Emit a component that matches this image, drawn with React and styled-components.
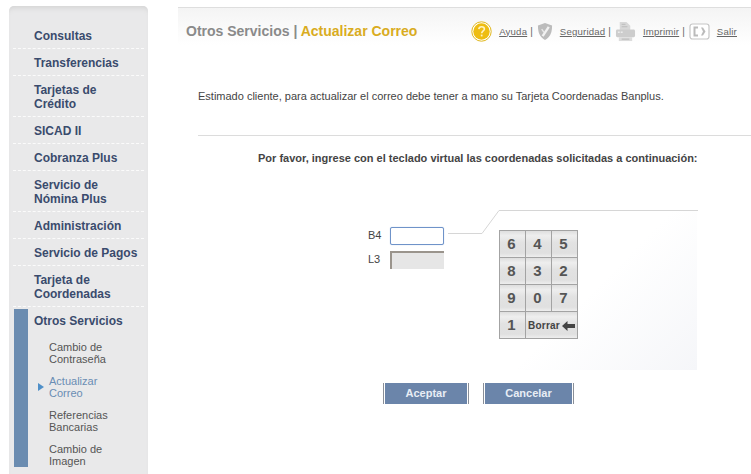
import React from "react";
import styled, { createGlobalStyle } from "styled-components";

const Global = createGlobalStyle`
  html, body { margin: 0; padding: 0; background: #fff; }
  body { font-family: "Liberation Sans", Arial, sans-serif; overflow: hidden; }
`;

const menu = [
  { label: "Consultas" },
  { label: "Transferencias" },
  { label: "Tarjetas de Crédito", narrow: true },
  { label: "SICAD II" },
  { label: "Cobranza Plus" },
  { label: "Servicio de Nómina Plus", narrow: true },
  { label: "Administración" },
  { label: "Servicio de Pagos" },
  { label: "Tarjeta de Coordenadas", narrow: true },
];

const subMenu = [
  { label: "Cambio de Contraseña" },
  { label: "Actualizar Correo", active: true },
  { label: "Referencias Bancarias" },
  { label: "Cambio de Imagen" },
];

const keys = [["6", "4", "5"], ["8", "3", "2"], ["9", "0", "7"]];

function HelpIcon() {
  return (
    <svg width="21" height="21" viewBox="0 0 21 21">
      <circle cx="10.5" cy="10.5" r="9.7" fill="#fff" stroke="#e0b71c" strokeWidth="1" />
      <circle cx="10.5" cy="10.5" r="8.2" fill="#eebd12" />
      <path d="M7.8 8.2c.2-1.7 1.3-2.5 2.8-2.5s2.8.9 2.8 2.3c0 2-2.6 2-2.7 4.3" fill="none" stroke="#fff3c4" strokeWidth="1.6" />
      <rect x="9.8" y="13.6" width="1.7" height="1.8" fill="#fff3c4" />
    </svg>
  );
}

function ShieldIcon() {
  return (
    <svg width="16" height="19" viewBox="0 0 17 20">
      <path d="M8.5 1 16 3.500c0 7-1.500 12-7.500 15.500C2.500 15.500 1 10.500 1 3.500z" fill="#bcbcbc" />
      <path d="M12.500 5 6 15" stroke="#f2f2f2" strokeWidth="2.500" />
      <path d="M5 7.500 7.500 11" stroke="#e8e8e8" strokeWidth="1.500" />
    </svg>
  );
}

function PrintIcon() {
  return (
    <svg width="21" height="21" viewBox="0 0 22 22">
      <path d="M5 1h7l4 4v5H5z" fill="#d8d8d8" />
      <path d="M7 3.500h4M7 6h6" stroke="#bcbcbc" />
      <rect x="1" y="9" width="20" height="8" rx="1.500" fill="#cdcdcd" />
      <rect x="3" y="11" width="2" height="1.500" fill="#eee" />
      <rect x="6" y="11" width="2" height="1.500" fill="#eee" />
      <rect x="4" y="17" width="14" height="4" fill="#dcdcdc" />
      <path d="M7 19h8" stroke="#b4b4b4" />
    </svg>
  );
}

function ExitIcon() {
  return (
    <svg width="21" height="17" viewBox="0 0 21 17">
      <rect x="1" y="1" width="19" height="15" rx="2.500" fill="#fff" stroke="#c6c6c6" strokeWidth="1.200" />
      <path d="M9 4.500H5.500v8H9" fill="none" stroke="#bbb" strokeWidth="2" />
      <path d="M12 4.500h2l2.500 4-2.500 4h-2l2-4z" fill="#bbb" />
    </svg>
  );
}

function BackArrow() {
  return (
    <svg width="13" height="10" viewBox="0 0 13 10">
      <path d="M0 5 5.500 0v3H13v4H5.500v3z" fill="#444" />
    </svg>
  );
}

export default function App() {
  return (
    <Page>
      <Global />
      <Sidebar>
        {menu.map((item) => (
          <MenuItem key={item.label} $narrow={item.narrow}>
            <span>{item.label}</span>
          </MenuItem>
        ))}
        <OpenSection>
          <SectionTitle>Otros Servicios</SectionTitle>
          {subMenu.map((item) => (
            <SubItem key={item.label} $active={item.active}>
              <span>{item.label}</span>
            </SubItem>
          ))}
        </OpenSection>
      </Sidebar>

      <Main>
        <Header>
          <Title>
            Otros Servicios | <em>Actualizar Correo</em>
          </Title>
          <Tools>
            <HelpIcon />
            <ToolLink>Ayuda</ToolLink>
            <Sep>|</Sep>
            <ShieldIcon />
            <ToolLink>Seguridad</ToolLink>
            <Sep>|</Sep>
            <PrintIcon />
            <ToolLink>Imprimir</ToolLink>
            <Sep>|</Sep>
            <ExitIcon />
            <ToolLink>Salir</ToolLink>
          </Tools>
        </Header>

        <Intro>
          Estimado cliente, para actualizar el correo debe tener a mano su Tarjeta Coordenadas Banplus.
        </Intro>
        <Prompt>Por favor, ingrese con el teclado virtual las coordenadas solicitadas a continuación:</Prompt>

        <Coordinates>
          <Fields>
            <FieldRow>
              <FieldLabel>B4</FieldLabel>
              <FieldInput />
            </FieldRow>
            <FieldRow>
              <FieldLabel>L3</FieldLabel>
              <FieldInput disabled />
            </FieldRow>
          </Fields>
          <KeypadPanel>
            <Connector width="254" height="27" viewBox="0 0 254 27">
              <path d="M0 23.500H34L51 .5H250" fill="none" stroke="#d6d6d6" />
            </Connector>
            <Keypad>
              {keys.flat().map((k) => (
                <Key key={k}>{k}</Key>
              ))}
              <Key>1</Key>
              <EraseKey>
                Borrar <BackArrow />
              </EraseKey>
            </Keypad>
          </KeypadPanel>
        </Coordinates>

        <Actions>
          <ActionButton $width={86}>Aceptar</ActionButton>
          <ActionButton $width={91}>Cancelar</ActionButton>
        </Actions>
      </Main>
    </Page>
  );
}

const Page = styled.div`
  display: flex;
  width: 751px;
  height: 474px;
  overflow: hidden;
  background: #fff;
`;

// - sidebar
const Sidebar = styled.nav`
  flex: none;
  box-sizing: border-box;
  width: 139px;
  height: 468px;
  margin: 6px 0 0 9px;
  padding-top: 16px;
  background: #e9e9ea;
  border-radius: 5px 5px 0 0;
  box-shadow: inset 0 5px 5px -3px #d4d4d4;
`;

const MenuItem = styled.div`
  display: flex;
  align-items: center;
  box-sizing: border-box;
  min-height: 27px;
  margin: 0 4px;
  padding: ${(p) => (p.$narrow ? "7px 0 5px 21px" : "2px 0 0 21px")};
  border-bottom: 1px dashed #fbfbfb;
  font-size: 12px;
  font-weight: bold;
  line-height: 14px;
  color: #3a4b6d;

  span {
    max-width: ${(p) => (p.$narrow ? "90px" : "none")};
  }
`;

const OpenSection = styled.div`
  margin: 2px 0 0 5px;
  border-left: 14px solid #6b8cb0;
`;

const SectionTitle = styled.div`
  padding: 5px 0 13px 6px;
  font-size: 12px;
  font-weight: bold;
  line-height: 14px;
  color: #3a4b6d;
`;

const SubItem = styled.div`
  position: relative;
  width: 72px;
  margin: 0 0 10px 21px;
  font-size: 11px;
  line-height: 12px;
  color: ${(p) => (p.$active ? "#6a8db4" : "#555")};

  &::before {
    content: "";
    display: ${(p) => (p.$active ? "block" : "none")};
    position: absolute;
    left: -11px;
    top: 8px;
    border-left: 6px solid #4f8fc8;
    border-top: 4px solid transparent;
    border-bottom: 4px solid transparent;
  }
`;

// - main
const Main = styled.main`
  flex: 1;
  min-width: 0;
  margin: 7px 0 0 30px;
`;

const Header = styled.header`
  display: flex;
  align-items: center;
  justify-content: space-between;
  box-sizing: border-box;
  height: 38px;
  padding: 9px 14px 0 8px;
  border-top: 1px solid #dedede;
  background: linear-gradient(#f4f4f4, #fff);
`;

const Title = styled.h1`
  margin: 0;
  font-size: 14px;
  font-weight: bold;
  color: #8a8a8a;

  em {
    font-style: normal;
    color: #d9ac1f;
  }
`;

const Tools = styled.div`
  display: flex;
  align-items: center;
  gap: 3px;
`;

const ToolLink = styled.a`
  margin-left: 4px;
  font-size: 9.600px;
  text-decoration: underline;
  color: #666;
  letter-spacing: 0.2px;
`;

const Sep = styled.span`
  margin-right: 1px;
  font-size: 10px;
  color: #666;
`;

const Intro = styled.p`
  box-sizing: border-box;
  height: 91px;
  margin: 0 0 0 20px;
  padding-top: 45px;
  border-bottom: 1px solid #dcdcdc;
  font-size: 11px;
  line-height: 12px;
  color: #444;
`;

const Prompt = styled.p`
  margin: 16px 0 0 80px;
  font-size: 11px;
  font-weight: bold;
  line-height: 13px;
  color: #444;
`;

const Coordinates = styled.section`
  display: flex;
  margin: 45px 0 0 190px;
`;

const Fields = styled.div`
  display: flex;
  flex-direction: column;
  gap: 6px;
  margin-top: 17px;
`;

const FieldRow = styled.label`
  display: flex;
  align-items: center;
  gap: 8px;
  font-size: 11px;
  color: #444;
`;

const FieldLabel = styled.span`
  width: 14px;
  margin-bottom: 2px;
`;

const FieldInput = styled.input`
  box-sizing: border-box;
  width: 54px;
  height: 18px;
  padding: 0;
  outline: none;
  background: #fff;
  border: 1px solid #6f93c9;
  border-radius: 2px;
  box-shadow: 0 0 1px #9ab6dd;

  &:disabled {
    background: #e6e6e6;
    border: none;
    border-top: 2px solid #9a948c;
    border-left: 2px solid #9a948c;
    border-radius: 0;
    box-shadow: none;
  }
`;

const KeypadPanel = styled.div`
  position: relative;
  box-sizing: border-box;
  width: 208px;
  height: 160px;
  margin-left: 45px;
  padding: 20px 0 0 10px;
  background: linear-gradient(135deg, #fff 50%, #f5f6f9 100%);
`;

const Connector = styled.svg`
  position: absolute;
  left: -41px;
  top: 0;
`;

const Keypad = styled.div`
  display: grid;
  grid-template-columns: repeat(3, 25px);
  grid-auto-rows: 26px;
  gap: 1px;
  width: 77px;
  padding: 1px;
  background: #a3a3a3;
`;

const Key = styled.button`
  padding: 0 2px 2px 0;
  border: none;
  background: linear-gradient(#dedede 0, #eee 18%, #e2e2e2 45%, #e0e0e0 85%, #eee 100%);
  font-family: inherit;
  font-size: 15px;
  font-weight: bold;
  color: #555;
`;

const EraseKey = styled(Key)`
  grid-column: span 2;
  display: flex;
  align-items: center;
  justify-content: center;
  gap: 2px;
  padding: 1px 0 0;
  font-size: 10px;
  letter-spacing: 0.2px;
  color: #444;
`;

const Actions = styled.div`
  display: flex;
  gap: 14px;
  margin: 13px 0 0 205px;
`;

const ActionButton = styled.button`
  box-sizing: border-box;
  width: ${(p) => p.$width}px;
  height: 21px;
  padding: 0 0 2px;
  background: #6b85aa;
  border: none;
  border-left: 1px solid #8a8f98;
  border-right: 1px solid #8a8f98;
  box-shadow: inset 1px 0 #fff, inset -1px 0 #fff;
  font-family: inherit;
  font-size: 11px;
  font-weight: bold;
  color: #e8edf5;
`;
